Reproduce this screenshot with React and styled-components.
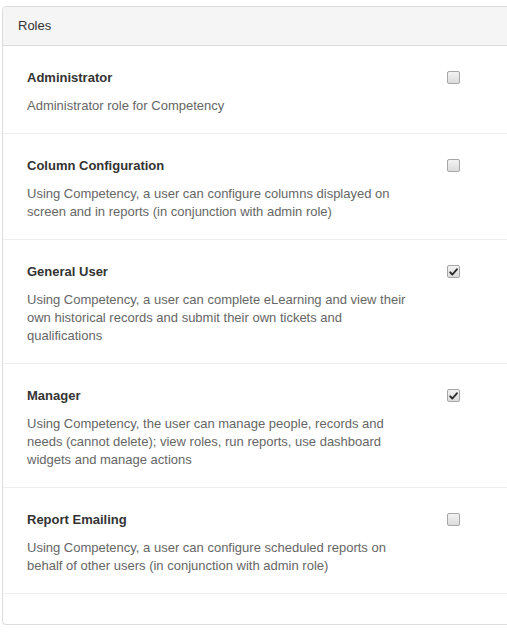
import React from "react";
import styled, { createGlobalStyle } from "styled-components";

const GlobalStyle = createGlobalStyle`
  html, body {
    margin: 0;
    padding: 0;
    background: #fff;
  }
  body {
    font-family: "Liberation Sans", Arial, sans-serif;
    font-size: 13px;
    color: #333;
  }
`;

const roles = [
  {
    id: "admin",
    name: "Administrator",
    desc: ["Administrator role for Competency"],
    checked: false,
  },
  {
    id: "columns",
    name: "Column Configuration",
    desc: [
      "Using Competency, a user can configure columns displayed on",
      "screen and in reports (in conjunction with admin role)",
    ],
    checked: false,
  },
  {
    id: "general",
    name: "General User",
    desc: [
      "Using Competency, a user can complete eLearning and view their",
      "own historical records and submit their own tickets and",
      "qualifications",
    ],
    checked: true,
  },
  {
    id: "manager",
    name: "Manager",
    desc: [
      "Using Competency, the user can manage people, records and",
      "needs (cannot delete); view roles, run reports, use dashboard",
      "widgets and manage actions",
    ],
    checked: true,
  },
  {
    id: "emailing",
    name: "Report Emailing",
    desc: [
      "Using Competency, a user can configure scheduled reports on",
      "behalf of other users (in conjunction with admin role)",
    ],
    checked: false,
  },
];

export default function App() {
  return (
    <>
      <GlobalStyle />
      <Page>
        <Panel>
          <Heading>Roles</Heading>
          <Body>
            {roles.map((role) => (
              <Row key={role.id}>
                <Info>
                  <Title>{role.name}</Title>
                  <Desc>
                    {role.desc.map((line, i) => (
                      <span key={i}>{line}</span>
                    ))}
                  </Desc>
                </Info>
                <Check checked={role.checked}>
                  {role.checked && (
                    <svg width="9" height="8" viewBox="0 0 9 8">
                      <path
                        d="M1.2 4.3 L3.4 6.5 L7.9 1.3"
                        fill="none"
                        stroke="#2b2b2b"
                        strokeWidth="1.9"
                        strokeLinecap="round"
                        strokeLinejoin="round"
                      />
                    </svg>
                  )}
                </Check>
              </Row>
            ))}
          </Body>
        </Panel>
      </Page>
    </>
  );
}

const Page = styled.div`
  padding: 6px 0 0 2px;
`;

const Panel = styled.div`
  width: 520px;
  border: 1px solid #dddddd;
  border-radius: 4px;
  background: #fff;
  box-shadow: 0 1px 1px rgba(0, 0, 0, 0.05);
  overflow: hidden;
`;

const Heading = styled.div`
  background: #f5f5f5;
  border-bottom: 1px solid #dddddd;
  padding: 10px 15px;
  height: 18px;
  line-height: 18px;
  color: #333;
`;

const Body = styled.div`
  padding-bottom: 30px;
`;

const Row = styled.div`
  display: grid;
  grid-template-columns: 1fr 13px;
  column-gap: 20px;
  align-items: start;
  padding: 21px 63px 18px 24px;
  border-bottom: 1px solid #eeeeee;
`;

const Info = styled.div`
  display: flex;
  flex-direction: column;
  gap: 8px;
`;

const Title = styled.div`
  font-weight: bold;
  line-height: 22px;
  color: #333;
`;

const Desc = styled.div`
  display: flex;
  flex-direction: column;
  line-height: 18px;
  color: #666;
  white-space: nowrap;
`;

const Check = styled.div`
  box-sizing: border-box;
  width: 13px;
  height: 13px;
  margin-top: 4px;
  border: 1px solid #a6a6a6;
  border-radius: 2px;
  background: linear-gradient(#f2f2f2, #dcdcdc);
  display: flex;
  align-items: center;
  justify-content: center;
`;
